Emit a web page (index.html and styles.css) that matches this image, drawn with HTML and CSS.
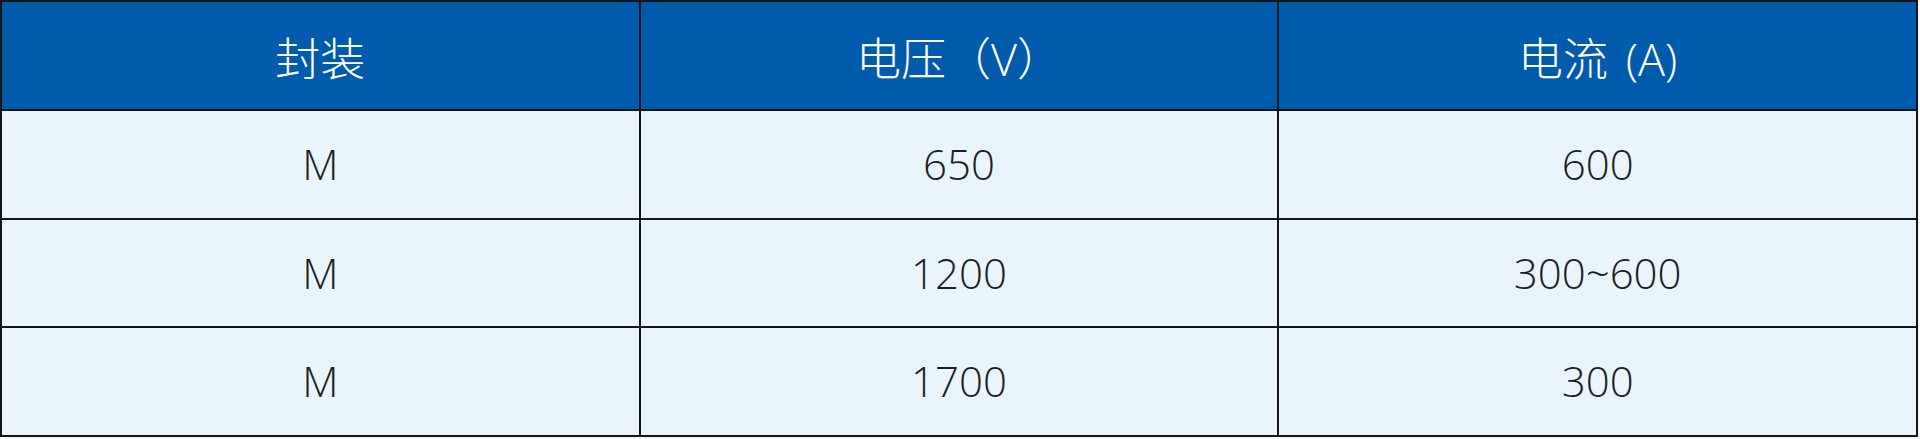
FILE: index.html
```html
<!DOCTYPE html>
<html lang="zh">
<head>
<meta charset="utf-8">
<link rel="stylesheet" href="styles.css">
</head>
<body>
<table class="spec">
  <thead>
    <tr><th>封装</th><th>电压（V）</th><th>电流 (A)</th></tr>
  </thead>
  <tbody>
    <tr><td>M</td><td>650</td><td>600</td></tr>
    <tr><td>M</td><td>1200</td><td>300~600</td></tr>
    <tr><td>M</td><td>1700</td><td>300</td></tr>
  </tbody>
</table>
</body>
</html>
```
FILE: styles.css
```css
html, body {
  margin: 0;
  padding: 0;
  background: #f4f6f8;
}
.spec {
  width: 1918px;
  border-collapse: collapse;
  table-layout: fixed;
  font-family: "Open Sans", "Noto Sans CJK SC", sans-serif;
  font-weight: 300;
  font-size: 42px;
  line-height: 1.2;
}
.spec th, .spec td {
  border: 2px solid #151515;
  text-align: center;
  vertical-align: middle;
  padding: 0;
}
.spec th {
  height: 101px;
  background: #005bac;
  color: #ffffff;
  font-weight: 300;
  font-size: 45px;
  word-spacing: 6px;
  padding-top: 6px;
}
.spec td {
  height: 106.6px;
  background: #e8f5fd;
  color: #1e1e1e;
}
```
